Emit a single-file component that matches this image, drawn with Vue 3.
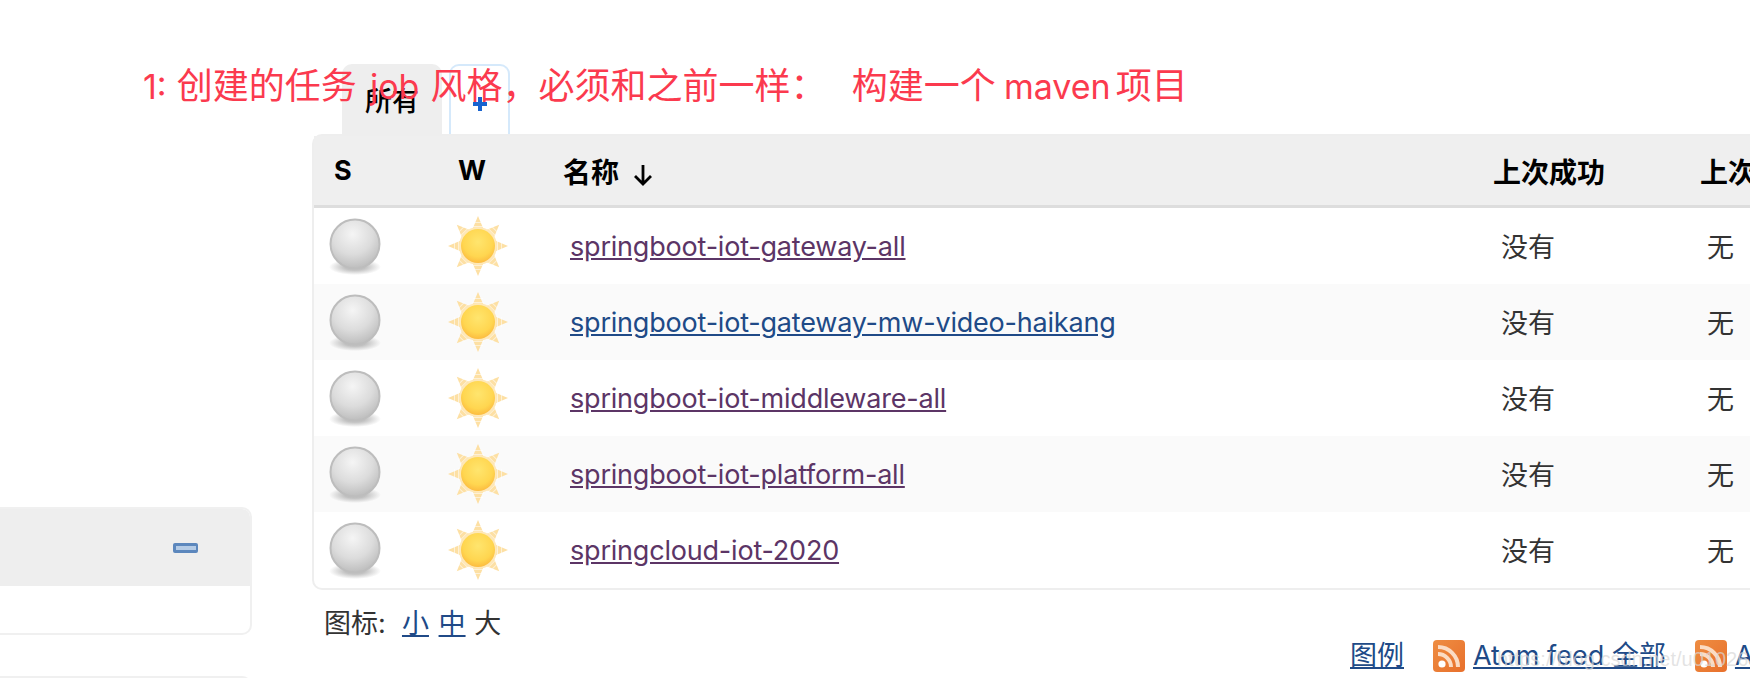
<template>
  <div class="page">
    <div class="note"><span class="lat">1:</span> 创建的任务 <span class="lat job">job</span> 风格，必须和之前一样：<span class="gap">&nbsp;</span> 构建一个 <span class="lat maven">maven</span> 项目</div>

    <aside class="side">
      <section class="panel">
        <div class="panel-head">
          <span class="collapse"><i></i></span>
        </div>
        <div class="panel-body"></div>
      </section>
      <section class="panel panel-next"></section>
    </aside>

    <main class="main">
      <div class="tabs">
        <span class="tab active">所有</span>
        <span class="tab add">
          <svg width="16" height="16" viewBox="0 0 16 16" aria-hidden="true">
            <path d="M8 1v14M1 8h14" stroke="#1763cf" stroke-width="4" />
          </svg>
        </span>
      </div>

      <table class="jobs">
        <colgroup>
          <col class="c-s" />
          <col class="c-w" />
          <col class="c-name" />
          <col class="c-ok" />
          <col class="c-fail" />
        </colgroup>
        <thead>
          <tr>
            <th class="th-s">S</th>
            <th class="th-w">W</th>
            <th class="th-name">
              名称
              <svg class="sort" width="22" height="24" viewBox="0 0 22 24" aria-hidden="true">
                <path d="M11 2v19M3 13l8 8 8-8" fill="none" stroke="#000" stroke-width="2.8" />
              </svg>
            </th>
            <th>上次成功</th>
            <th>上次失败</th>
          </tr>
        </thead>
        <tbody>
          <tr v-for="(job, i) in jobs" :key="job.name">
            <td class="td-icon">
              <svg class="ball" width="58" height="60" viewBox="0 0 58 60" aria-hidden="true">
                <defs>
                  <radialGradient :id="'ball' + i" cx="0.45" cy="0.3" r="0.75">
                    <stop offset="0" stop-color="#f5f5f5" />
                    <stop offset="0.55" stop-color="#dcdcdc" />
                    <stop offset="1" stop-color="#b8b8b8" />
                  </radialGradient>
                  <radialGradient :id="'shade' + i">
                    <stop offset="0.4" stop-color="#999" stop-opacity="0.6" />
                    <stop offset="1" stop-color="#999" stop-opacity="0" />
                  </radialGradient>
                </defs>
                <ellipse cx="29" cy="50" rx="26" ry="8" :fill="'url(#shade' + i + ')'" />
                <circle cx="29" cy="27" r="24.5" :fill="'url(#ball' + i + ')'" stroke="#bdbdbd" stroke-width="2" />
              </svg>
            </td>
            <td class="td-icon td-sun">
              <svg class="sun" width="60" height="60" viewBox="0 0 60 60" aria-hidden="true">
                <defs>
                  <radialGradient :id="'sun' + i" cx="0.5" cy="0.38" r="0.62">
                    <stop offset="0" stop-color="#ffe56e" />
                    <stop offset="0.7" stop-color="#ffd650" />
                    <stop offset="1" stop-color="#fcbc40" />
                  </radialGradient>
                </defs>
                <g v-for="a in rays" :key="a" :transform="'rotate(' + a + ' 30 30)'">
                  <path d="M30 0 35.5 13h-11Z" fill="#fde0a4" />
                  <path d="M25 6.5h10M24 10.5h12" stroke="#fff" stroke-opacity="0.55" stroke-width="1" />
                </g>
                <circle cx="30" cy="30" r="19" fill="#fee8b8" />
                <circle cx="30" cy="30" r="17" :fill="'url(#sun' + i + ')'" />
              </svg>
            </td>
            <td class="td-name">
              <a href="#" :class="{ fresh: job.fresh }">{{ job.name }}</a>
            </td>
            <td class="td-ok">没有</td>
            <td class="td-fail">无</td>
          </tr>
        </tbody>
      </table>

      <div class="sizes">
        图标:&nbsp; <a href="#">小</a> <a href="#">中</a> 大
      </div>

      <div class="feeds">
        <a href="#" class="legend">图例</a>
        <span class="feed" v-for="f in feeds" :key="f">
          <svg width="32" height="32" viewBox="0 0 32 32" aria-hidden="true">
            <defs>
              <linearGradient :id="'rss' + f.length" x1="0" y1="0" x2="1" y2="1">
                <stop offset="0" stop-color="#ee8d42" />
                <stop offset="1" stop-color="#e8702c" />
              </linearGradient>
            </defs>
            <rect width="32" height="32" rx="4" :fill="'url(#rss' + f.length + ')'" />
            <circle cx="9" cy="24" r="3.6" fill="#fff" />
            <path d="M5 14c7 0 13 6 13 13M5 7c11 0 20 9 20 20" fill="none" stroke="#fbdcc4" stroke-width="4" />
          </svg>
          <a href="#">{{ f }}</a>
        </span>
      </div>
    </main>

    <div class="mark">https://blog.csdn.net/u010264460</div>
  </div>
</template>

<script setup>
const jobs = [
  { name: 'springboot-iot-gateway-all' },
  { name: 'springboot-iot-gateway-mw-video-haikang', fresh: true },
  { name: 'springboot-iot-middleware-all' },
  { name: 'springboot-iot-platform-all' },
  { name: 'springcloud-iot-2020' }
];

const rays = [0, 45, 90, 135, 180, 225, 270, 315];
const feeds = ['Atom feed 全部', 'Atom feed 失败'];
</script>

<style>
html,
body {
  margin: 0;
  background: #fff;
  overflow: hidden;
}
</style>

<style scoped>
.page {
  position: relative;
  display: flex;
  width: 1750px;
  height: 678px;
  overflow: hidden;
  background: #fff;
  color: #333;
  font-family: Inter, "Noto Sans CJK SC", sans-serif;
  font-size: 27px;
}

.note {
  position: absolute;
  left: 143px;
  top: 61px;
  z-index: 3;
  color: #fb3a4e;
  font-size: 36px;
  line-height: 50px;
  white-space: pre;
}

.lat {
  font-size: 34px;
}

.job {
  margin: 0 1px 0 3px;
}

.gap {
  margin-right: 5px;
}

.maven {
  margin: 0 -5px 0 -2px;
}

.side {
  flex: 0 0 252px;
  padding-top: 507px;
}

.panel {
  height: 128px;
  box-sizing: border-box;
  border: 2px solid #f0f0f0;
  border-left: 0;
  border-radius: 0 10px 10px 0;
  overflow: hidden;
}

.panel-next {
  margin-top: 41px;
}

.panel-head {
  display: flex;
  justify-content: flex-end;
  align-items: center;
  height: 77px;
  padding-right: 52px;
  background: #eee;
}

.collapse {
  display: flex;
  align-items: center;
  justify-content: center;
  width: 25px;
  height: 10px;
  border-radius: 2px;
  background: #5c87bd;
}

.collapse i {
  display: block;
  width: 20px;
  height: 4px;
  background: #b4cbe6;
}

.main {
  flex: 0 0 auto;
  margin-left: 60px;
  padding-top: 64px;
}

.tabs {
  display: flex;
  gap: 7px;
  height: 70px;
  margin-left: 30px;
}

.tab {
  display: flex;
  justify-content: center;
  box-sizing: border-box;
  border-radius: 10px 10px 0 0;
}

.tab.active {
  width: 100px;
  padding-top: 20px;
  background: #eee;
  color: #000;
  font-weight: 500;
  line-height: 36px;
}

.tab.add {
  width: 61px;
  padding-top: 30px;
  border: 2px solid #d5e9fb;
  border-bottom: 0;
}

.jobs {
  width: 1640px;
  border-collapse: separate;
  border-spacing: 0;
  table-layout: fixed;
  border: 2px solid #eee;
  border-radius: 10px;
}

.c-s { width: 122px; }
.c-w { width: 105px; }
.c-name { width: 930px; }
.c-ok { width: 207px; }

.jobs th {
  height: 69px;
  padding: 0 0 0 22px;
  background: #efefef;
  border-bottom: 3px solid #ddd;
  color: #000;
  font-size: 28px;
  font-weight: 700;
  text-align: left;
  white-space: nowrap;
}

.jobs .th-s {
  padding-left: 20px;
  font-size: 27px;
}

.jobs .th-w {
  padding-left: 22px;
  font-size: 27px;
}

.sort {
  margin-left: 6px;
  vertical-align: -4px;
}

.jobs td {
  box-sizing: border-box;
  height: 76px;
  padding: 0;
  white-space: nowrap;
}

.jobs tbody tr:nth-child(even) td {
  background: #fafafa;
}

.td-icon {
  line-height: 0;
}

.ball {
  margin: 2px 0 0 12px;
}

.td-sun .sun {
  margin-left: 12px;
}

.jobs .td-name {
  padding-left: 29px;
  letter-spacing: -0.2px;
}

.jobs .td-ok {
  padding: 0 0 2px 30px;
}

.jobs .td-fail {
  padding: 0 0 2px 29px;
}

a {
  color: #204a87;
  text-decoration: underline;
}

.td-name a {
  color: #5c3566;
}

.td-name a.fresh {
  color: #204a87;
}

.sizes {
  margin: 16px 0 0 12px;
  line-height: 36px;
}

.sizes a {
  margin: 0 1px;
}

.feeds {
  display: flex;
  align-items: center;
  gap: 29px;
  margin: -8px 0 0 1038px;
  white-space: nowrap;
}

.feeds a {
  margin-bottom: 4px;
}

.feed {
  display: inline-flex;
  align-items: center;
  gap: 8px;
}

.mark {
  position: absolute;
  left: 1497px;
  top: 648px;
  z-index: 2;
  color: rgba(215, 215, 215, 0.7);
  font-family: "Liberation Sans", sans-serif;
  font-size: 20px;
  white-space: nowrap;
}
</style>
